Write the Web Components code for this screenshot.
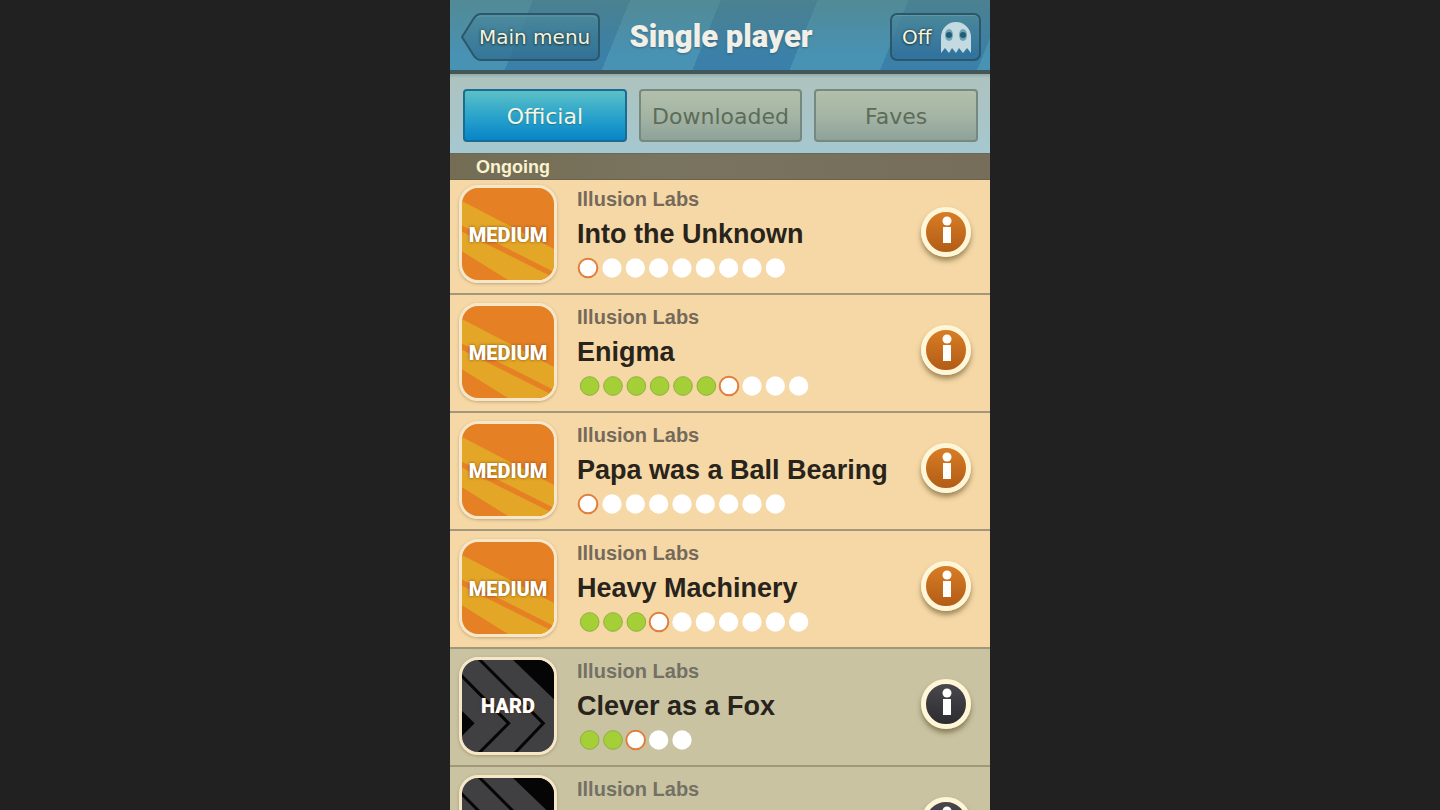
<!DOCTYPE html>
<html lang="en">
<head>
<meta charset="utf-8">
<meta name="viewport" content="width=device-width, initial-scale=1">
<title>Single player</title>
<style>
body {
  margin: 0;
  background: #212121;
  font-family: "Liberation Sans", Arial, sans-serif;
}
</style>
</head>
<body>
<level-browser>
  <top-bar slot="header">
    <back-button slot="left">Main menu</back-button>
    Single player
    <ghost-toggle slot="right">Off</ghost-toggle>
  </top-bar>
  <tab-bar slot="tabs">
    <tab-button selected>Official</tab-button>
    <tab-button>Downloaded</tab-button>
    <tab-button>Faves</tab-button>
  </tab-bar>
  <section-title>Ongoing</section-title>
  <level-row level="medium" done="0" total="9"><span slot="author">Illusion Labs</span>Into the Unknown</level-row>
  <level-row level="medium" done="6" total="10"><span slot="author">Illusion Labs</span>Enigma</level-row>
  <level-row level="medium" done="0" total="9"><span slot="author">Illusion Labs</span>Papa was a Ball Bearing</level-row>
  <level-row level="medium" done="3" total="10"><span slot="author">Illusion Labs</span>Heavy Machinery</level-row>
  <level-row level="hard" done="2" total="5"><span slot="author">Illusion Labs</span>Clever as a Fox</level-row>
  <level-row level="hard" done="0" total="0"><span slot="author">Illusion Labs</span></level-row>
</level-browser>

<script>
function render(el, html) {
  const template = document.createElement('template');
  template.innerHTML = html;
  el.attachShadow({ mode: 'open' }).append(template.content.cloneNode(true));
}

class LevelBrowser extends HTMLElement {
  constructor() {
    super();
    render(this, `
<style>
:host {
  display: flex;
  flex-direction: column;
  max-width: 540px;
  height: 100vh;
  margin: 0 auto;
  overflow: hidden;
  background: #c9c3a2;
}
main {
  flex: 1;
  min-height: 0;
  overflow: hidden;
}
</style>
<slot name="header"></slot>
<slot name="tabs"></slot>
<main><slot></slot></main>
`);
  }
}

class TopBar extends HTMLElement {
  constructor() {
    super();
    render(this, `
<style>
:host {
  display: block;
  flex: none;
  border-bottom: 4px solid #41575a;
  background:
    linear-gradient(rgba(92, 130, 120, 0.5), rgba(70, 150, 185, 0) 80%),
    repeating-linear-gradient(112deg, #4892b4 0 77px, #3a80a8 77px 167px, #4892b4 167px 174px);
}
header {
  display: grid;
  grid-template-columns: 1fr auto 1fr;
  align-items: center;
  height: 70px;
  padding: 4px 9px 0 11px;
  box-sizing: border-box;
}
h1 {
  margin: 0;
  color: #f1efe6;
  font: 900 31px/40px Roboto, sans-serif;
  text-shadow: 0 1px 2px rgba(30, 70, 90, 0.5);
}
.right {
  justify-self: end;
}
</style>
<header>
  <div><slot name="left"></slot></div>
  <h1><slot></slot></h1>
  <div class="right"><slot name="right"></slot></div>
</header>
`);
  }
}

class BackButton extends HTMLElement {
  constructor() {
    super();
    render(this, `
<style>
:host {
  display: block;
}
button {
  display: block;
  position: relative;
  width: 139px;
  height: 48px;
  padding: 0 10px 0 18px;
  border: 0;
  background: none;
  color: #f6f4df;
  font: 20px/46px "DejaVu Sans", sans-serif;
  text-align: center;
  white-space: nowrap;
  text-shadow: 0 0 3px #203f46, 0 1px 2px #203f46;
}
svg {
  position: absolute;
  inset: 0;
}
span {
  position: relative;
}
</style>
<button type="button">
  <svg width="139" height="48" viewBox="0 0 139 48" aria-hidden="true">
    <defs>
      <linearGradient id="g" x2="0" y2="1">
        <stop offset="0" stop-color="#4b8a9c"/>
        <stop offset="1" stop-color="#2d6c90"/>
      </linearGradient>
    </defs>
    <path d="M1 24 L13 5 Q16 1 20 1 H132 Q138 1 138 7 V41 Q138 47 132 47 H20 Q16 47 13 43 Z" fill="url(#g)" fill-opacity=".75" stroke="#2b5768" stroke-width="2"/>
    <path d="M16 4 Q18 3 21 3 H131 Q135 3 136 6" fill="none" stroke="#7fb0b8" stroke-opacity=".4"/>
  </svg>
  <span><slot></slot></span>
</button>
`);
  }
}

class GhostToggle extends HTMLElement {
  constructor() {
    super();
    render(this, `
<style>
:host {
  display: block;
}
button {
  display: flex;
  align-items: center;
  justify-content: space-between;
  width: 91px;
  height: 48px;
  padding: 0 8px 0 10px;
  border: 2px solid #2b5768;
  border-radius: 7px;
  box-sizing: border-box;
  background: linear-gradient(rgba(75, 138, 156, 0.75), rgba(45, 108, 155, 0.75));
  box-shadow: inset 0 1px 0 rgba(127, 176, 184, 0.4);
  color: #f6f4df;
  font: 20px/44px "DejaVu Sans", sans-serif;
  text-shadow: 0 0 3px #203f46, 0 1px 2px #203f46;
}
</style>
<button type="button" aria-pressed="false">
  <span><slot></slot></span>
  <svg width="30" height="32" viewBox="0 0 30 32" aria-hidden="true">
    <path d="M0 32 V16 A15 15 0 0 1 30 16 V32 L26 27 L22 32 L18 27 L15 32 L11 27 L8 32 L4 27 Z" fill="#c3dbe0"/>
    <ellipse cx="8" cy="14" rx="4" ry="6" fill="#6da3b2"/>
    <ellipse cx="22" cy="14" rx="4" ry="6" fill="#6da3b2"/>
    <circle cx="8" cy="14" r="3" fill="#1f5d7a"/>
    <circle cx="22" cy="14" r="3" fill="#1f5d7a"/>
  </svg>
</button>
`);
  }
}

class TabBar extends HTMLElement {
  constructor() {
    super();
    render(this, `
<style>
:host {
  display: block;
  flex: none;
  background: linear-gradient(#93a9a6, #adc3bf 4px, #a9c5c8 60%, #a5c8d0);
}
nav {
  display: grid;
  grid-template-columns: repeat(3, 1fr);
  gap: 12px;
  padding: 15px 12px 11px 13px;
}
</style>
<nav><slot></slot></nav>
`);
  }
}

class TabButton extends HTMLElement {
  constructor() {
    super();
    render(this, `
<style>
:host {
  display: block;
}
button {
  display: block;
  width: 100%;
  height: 53px;
  padding: 2px 0 0;
  border: 2px solid #76897f;
  border-radius: 4px;
  background: linear-gradient(#b1c0ac, #a5b5a4 50%, #8fa29a);
  color: #5c6c59;
  font: 22px/47px "DejaVu Sans", sans-serif;
  text-align: center;
}
:host([selected]) button {
  border-color: #1b6c92;
  background: linear-gradient(#5cc0c6, #2ba4cb 50%, #0785c8);
  color: #f2f7e4;
  text-shadow: 0 1px 1px #27768c;
}
</style>
<button type="button"><slot></slot></button>
`);
  }
}

class SectionTitle extends HTMLElement {
  constructor() {
    super();
    render(this, `
<style>
:host {
  display: block;
  position: relative;
  z-index: 1;
  margin-bottom: -3px;
}
h2 {
  margin: 0;
  padding: 2px 26px 0;
  border-top: 1px solid #67695c;
  border-bottom: 1px solid #6b6252;
  background: linear-gradient(90deg, #746d54, #79745f 40%, #766d5b);
  color: #fbf3cf;
  font: bold 18px/23px "Liberation Sans", Arial, sans-serif;
}
</style>
<h2><slot></slot></h2>
`);
  }
}

class LevelBadge extends HTMLElement {
  constructor() {
    super();
    render(this, `
<style>
:host {
  display: block;
}
div {
  display: grid;
  place-items: center;
  width: 98px;
  height: 98px;
  border: 3px solid #f8e6c8;
  border-radius: 19px;
  box-sizing: border-box;
  box-shadow: 0 1px 3px rgba(90, 70, 30, 0.35);
  overflow: hidden;
}
svg, b {
  grid-area: 1 / 1;
}
b {
  z-index: 1;
  color: #fff;
  font: 900 20px/20px Roboto, sans-serif;
  text-shadow: 0 0 3px rgba(90, 40, 0, 0.7);
}
:host([level="medium"]) b {
  padding-top: 2px;
}
</style>
<div></div>
`);
  }

  static get observedAttributes() {
    return ['level'];
  }

  attributeChangedCallback(name, oldVal, newVal) {
    const art = {
      medium: `
        <rect width="276" height="276" fill="#e58024"/>
        <path d="M0 39 L276 183 V276 H138 L0 190 Z" fill="#e4a626"/>
        <path d="M0 113 L276 252 V269 L0 131 Z" fill="#e58024"/>`,
      hard: `
        <rect width="276" height="276" fill="#404043"/>
        <path d="M153 0 H276 V118 Z M0 153 L38 190 L0 228 Z" fill="#050506"/>
        <path d="M48 -6 L244 190 L156 282 M-6 42 L140 190 L48 282" fill="none" stroke="#050506" stroke-width="9"/>`
    };
    this.shadowRoot.querySelector('div').innerHTML = `
<svg width="92" height="92" viewBox="0 0 276 276" aria-hidden="true">${art[newVal]}</svg>
<b>${newVal.toUpperCase()}</b>`;
  }
}

class LevelProgress extends HTMLElement {
  constructor() {
    super();
    render(this, `
<style>
:host {
  display: block;
}
svg {
  display: block;
}
</style>
<svg width="240" height="22" viewBox="0 0 720 66" role="img"></svg>
`);
  }

  // 70 units from one dot to the next, 3 units to a pixel
  update(done, total) {
    const start = done > 0 ? 38 : 35;
    let dots = '';
    for (let i = 0; i < total; i++) {
      const x = start + i * 70;
      if (i < done) {
        dots += `<circle cx="${x}" cy="33" r="28" fill="#a4cf37" stroke="#8fb040" stroke-width="3"/>`;
      } else if (i === done) {
        dots += `<circle cx="${x - 2}" cy="33" r="28" fill="#fff" stroke="#e07f3b" stroke-width="6"/>`;
      } else {
        dots += `<circle cx="${done > 0 ? x - 3 : x}" cy="33" r="29" fill="#fff"/>`;
      }
    }
    const svg = this.shadowRoot.querySelector('svg');
    svg.innerHTML = dots;
    svg.setAttribute('aria-label', `${done} of ${total}`);
  }
}

class LevelRow extends HTMLElement {
  constructor() {
    super();
    render(this, `
<style>
:host {
  display: block;
  --info-top: #dd8127;
  --info-bottom: #ad5814;
  background: #f5d8a6;
}
:host([level="hard"]) {
  --info-top: #4c4b50;
  --info-bottom: #29282c;
  background: #c9c3a2;
}
article {
  display: flex;
  align-items: flex-start;
  height: 118px;
  padding: 8px 19px 0 9px;
  border-bottom: 2px solid #a3977b;
  box-sizing: border-box;
}
.text {
  flex: 1;
  min-width: 0;
  padding-left: 20px;
}
.author {
  color: #75695a;
  font: bold 20px/28px "Liberation Sans", Arial, sans-serif;
}
:host([level="hard"]) .author {
  color: #737064;
}
h3 {
  height: 36px;
  margin: 3px 0 5px;
  color: #28231b;
  font: bold 27px/36px "Liberation Sans", Arial, sans-serif;
  white-space: nowrap;
}
button {
  width: 50px;
  height: 50px;
  margin: 22px 0 0;
  padding: 0;
  border: 5px solid #fef6d6;
  border-radius: 50%;
  background: linear-gradient(var(--info-top), var(--info-bottom));
  background-origin: border-box;
  box-shadow: 0 4px 5px rgba(80, 60, 20, 0.5);
}
svg {
  display: block;
}
</style>
<article>
  <level-badge></level-badge>
  <div class="text">
    <div class="author"><slot name="author"></slot></div>
    <h3><slot></slot></h3>
    <level-progress></level-progress>
  </div>
  <button type="button" aria-label="Info">
    <svg width="40" height="40" viewBox="0 0 40 40" aria-hidden="true">
      <circle cx="21" cy="9" r="4.5" fill="#fff"/>
      <rect x="17" y="15" width="8" height="16" fill="#fff"/>
    </svg>
  </button>
</article>
`);
  }

  connectedCallback() {
    this.shadowRoot.querySelector('level-badge').setAttribute('level', this.getAttribute('level'));
    this.shadowRoot.querySelector('level-progress').update(
      Number(this.getAttribute('done')),
      Number(this.getAttribute('total'))
    );
  }
}

customElements.define('level-browser', LevelBrowser);
customElements.define('top-bar', TopBar);
customElements.define('back-button', BackButton);
customElements.define('ghost-toggle', GhostToggle);
customElements.define('tab-bar', TabBar);
customElements.define('tab-button', TabButton);
customElements.define('section-title', SectionTitle);
customElements.define('level-badge', LevelBadge);
customElements.define('level-progress', LevelProgress);
customElements.define('level-row', LevelRow);
</script>
</body>
</html>
